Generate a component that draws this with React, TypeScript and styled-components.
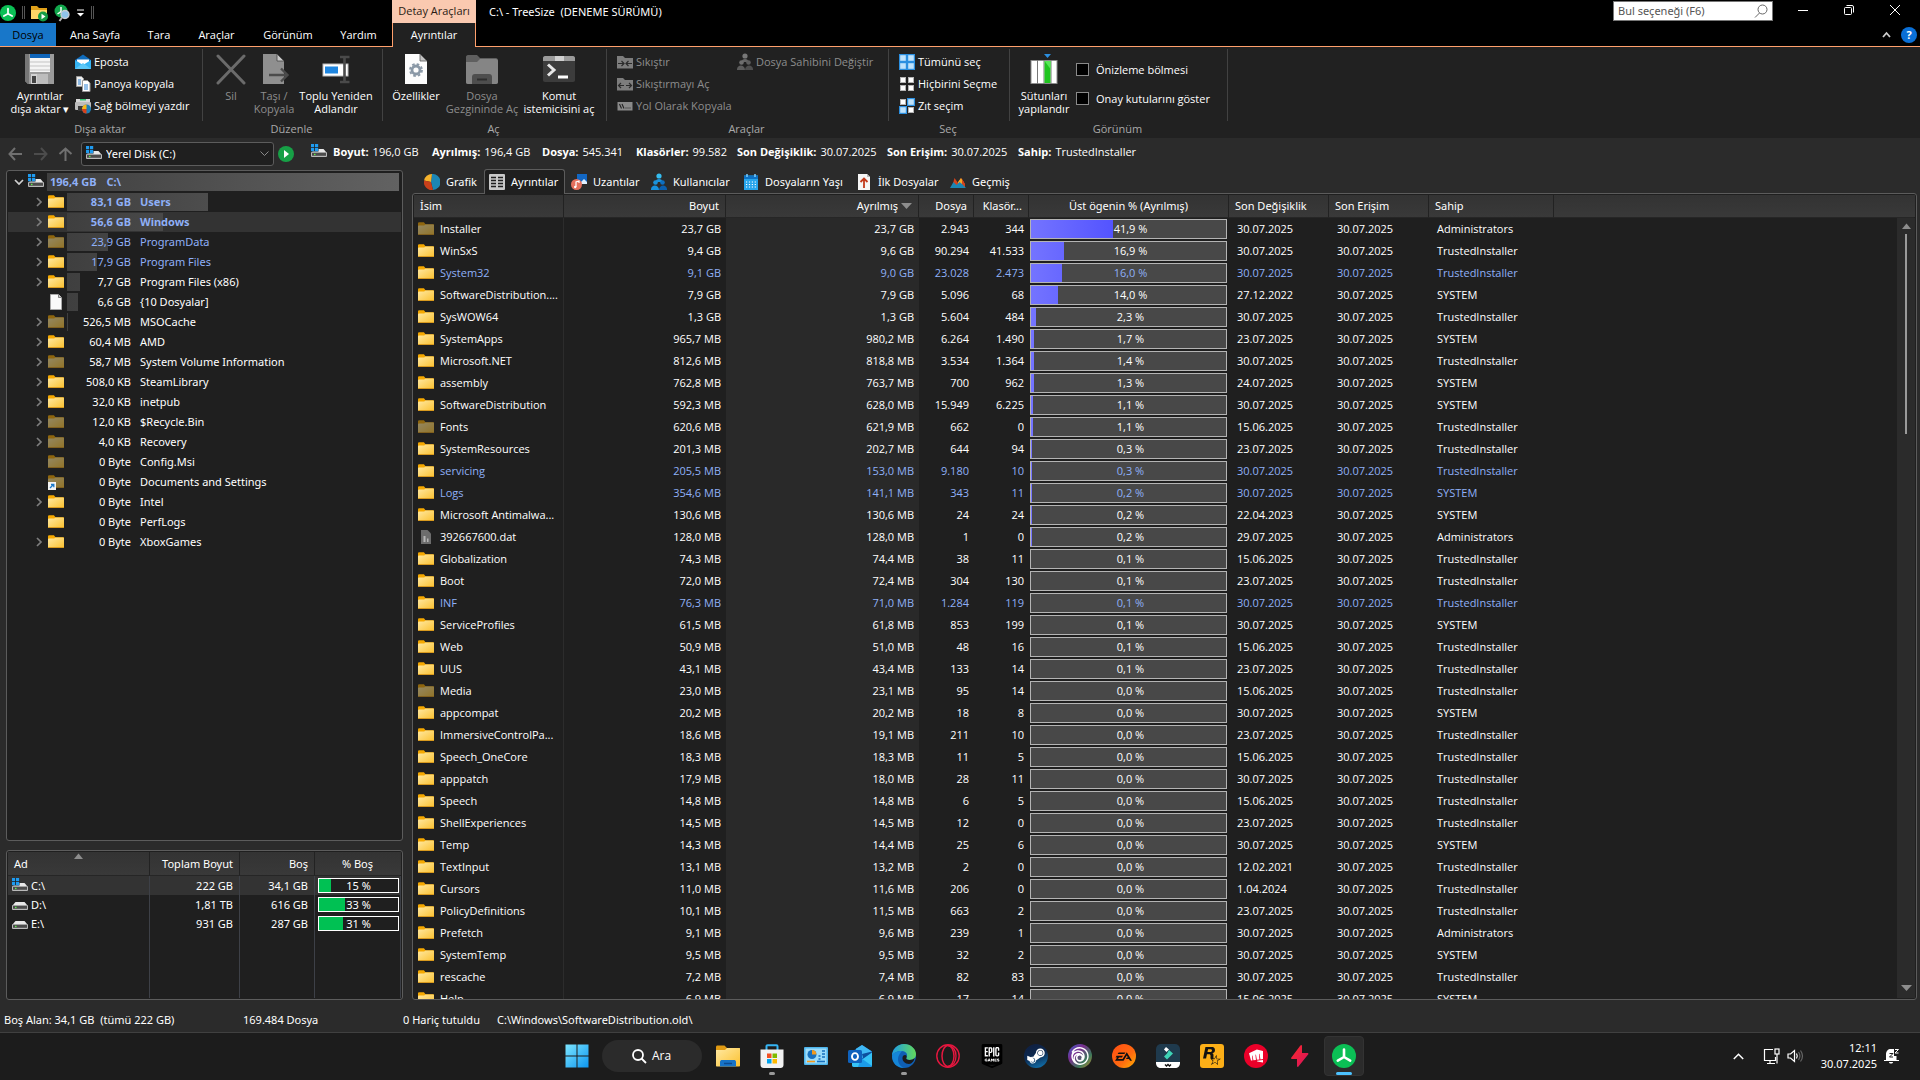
import React from "react";
import styled, { createGlobalStyle, css } from "styled-components";
import { SiEpicgames, SiUbisoft, SiEa, SiRockstargames, SiRiotgames } from "react-icons/si";
import { FaSteamSymbol } from "react-icons/fa";

const wide = `"Noto Sans", "Open Sans", sans-serif`;

const Global = createGlobalStyle`
  *, *::before, *::after { box-sizing: border-box; }
  body {
    margin: 0;
    background: #2b2b2b;
    color: #fff;
    font-family: "Open Sans", "Noto Sans", sans-serif;
    font-size: 11px;
    line-height: 14px;
    overflow: hidden;
  }
  button, input, select { font: inherit; color: inherit; }
  button { background: none; border: 0; padding: 0; margin: 0; cursor: default; }
  svg { display: block; flex: none; }
  ul { list-style: none; margin: 0; padding: 0; }
`;

const Screen = styled.div`
  height: 100vh;
  display: flex;
  flex-direction: column;
  white-space: nowrap;
`;

/* ---------- title bar ---------- */

const TitleArea = styled.header`
  flex: none;
  display: grid;
  grid-template-columns: 392px 84px 1fr auto;
  grid-template-rows: 23px 24px;
  background: linear-gradient(#ffa06c, #ffa06c) bottom / 100% 1px no-repeat #000;
`;
const QuickBar = styled.div`
  display: flex;
  align-items: center;
  gap: 6px;
  padding-top: 2px;
`;
const Grip = styled.span`
  width: 3px;
  height: 13px;
  border: 1px solid #555;
  border-width: 0 1px;
`;
const ContextTitle = styled.div`
  background: #fac9b0;
  color: #2a1c14;
  text-align: center;
  line-height: 21px;
`;
const WindowTitle = styled.h1`
  margin: 0;
  padding-left: 13px;
  font-family: ${wide};
  font-size: 11px;
  font-weight: 400;
  line-height: 23px;
  white-space: pre;
`;
const WindowTools = styled.div`
  display: flex;
  align-items: flex-start;
  padding-right: 2px;
`;
const SearchBox = styled.label`
  display: flex;
  align-items: center;
  width: 160px;
  height: 20px;
  margin: 1px 7px 0 0;
  padding: 0 4px;
  background: #fff;
  border: 1px solid #777;
  input {
    flex: 1;
    min-width: 0;
    border: 0;
    padding: 0;
    outline: 0;
    background: none;
    color: #333;
    font-family: ${wide};
  }
  input::placeholder { color: #555; opacity: 1; }
`;
const WinButton = styled.button`
  width: 46px;
  height: 20px;
  display: grid;
  place-items: center;
`;
const MenuTabs = styled.nav`
  display: flex;
  grid-column: 1;
`;
const MenuTab = styled.button<{ $w: number; $file?: boolean }>`
  width: ${p => p.$w}px;
  height: 23px;
  ${p => p.$file && css`background: #1877c9; color: #000;`}
`;
const ActiveTab = styled.button`
  height: 24px;
  background: #212121;
  border: 1px solid #ffa06c;
  border-width: 0 1px;
`;
const CornerTools = styled.div`
  grid-column: 4;
  display: flex;
  justify-content: flex-end;
  align-items: center;
  gap: 10px;
  padding-right: 3px;
`;
const Help = styled.button`
  width: 16px;
  height: 16px;
  border-radius: 50%;
  background: #0a6fd6;
  font-weight: 700;
  line-height: 16px;
`;

/* ---------- ribbon ---------- */

const Ribbon = styled.div`
  flex: none;
  display: flex;
  height: 91px;
  padding-top: 2px;
  background: #212121;
`;
const Group = styled.section<{ $w: number }>`
  width: ${p => p.$w}px;
  display: flex;
  flex-direction: column;
  background: linear-gradient(#424242, #424242) right top / 1px 72px no-repeat;
`;
const GroupBody = styled.div<{ $pad: number }>`
  height: 72px;
  display: flex;
  padding-left: ${p => p.$pad}px;
`;
const GroupName = styled.h2`
  margin: 0;
  padding-right: 3px;
  text-align: center;
  font-size: 11px;
  font-weight: 400;
  line-height: 16px;
  color: #a9a9a9;
`;
const BigButton = styled.button<{ $w: number; $off?: boolean }>`
  width: ${p => p.$w}px;
  height: 72px;
  display: flex;
  flex-direction: column;
  align-items: center;
  justify-content: flex-start;
  padding-top: 4px;
  gap: 4px;
  line-height: 13px;
  color: ${p => (p.$off ? "#8d8d8d" : "#fff")};
  span { width: max-content; }
`;
const Stack = styled.div<{ $w?: number; $gap?: number }>`
  width: ${p => (p.$w ? p.$w + "px" : "auto")};
  margin-left: ${p => p.$gap ?? 0}px;
  display: flex;
  flex-direction: column;
  padding-top: 2px;
`;
const SmallButton = styled.button<{ $off?: boolean }>`
  height: 22px;
  display: flex;
  align-items: center;
  gap: 3px;
  color: ${p => (p.$off ? "#8d8d8d" : "#fff")};
`;
const CheckRow = styled.label`
  height: 29px;
  display: flex;
  align-items: center;
  gap: 7px;
  input {
    appearance: none;
    width: 13px;
    height: 13px;
    margin: 0;
    background: #000;
    border: 1px solid #8a8a8a;
  }
`;
const CheckStack = styled.div`
  padding: 6px 0 0 6px;
`;

/* ---------- address row ---------- */

const AddressRow = styled.div`
  flex: none;
  height: 32px;
  display: flex;
  align-items: center;
  padding-left: 6px;
`;
const NavButton = styled.button`
  width: 25px;
  display: flex;
  align-items: center;
  padding-left: 2px;
`;
const Address = styled.label`
  width: 193px;
  height: 24px;
  display: flex;
  align-items: center;
  gap: 4px;
  padding: 0 4px;
  background: #1f1f1f;
  border: 1px solid #5c5c5c;
  border-radius: 3px;
  font-family: ${wide};
  select {
    appearance: none;
    flex: 1;
    background: none;
    border: 0;
    padding: 0;
    outline: 0;
  }
`;
const GoButton = styled.button`
  padding: 0 17px 0 4px;
`;
const FactBar = styled.div`
  display: flex;
  align-items: center;
  gap: 6px;
  padding-bottom: 4px;
`;
const Facts = styled.dl`
  display: flex;
  margin: 0;
`;
const Fact = styled.div<{ $w: number }>`
  width: ${p => p.$w}px;
  display: flex;
  gap: 4px;
  dt { font-weight: 700; }
  dd { margin: 0; }
`;

/* ---------- panels ---------- */

const Main = styled.main`
  flex: 1;
  min-height: 0;
  display: grid;
  grid-template-columns: 397px minmax(0, 1fr);
  gap: 9px;
  padding: 0 3px 0 6px;
`;
const LeftColumn = styled.div`
  min-height: 0;
  display: flex;
  flex-direction: column;
  gap: 9px;
`;
const RightColumn = styled.div`
  min-height: 0;
  display: flex;
  flex-direction: column;
`;
const Panel = styled.section`
  background: #1f1f1f;
  border: 1px solid #5c5c5c;
  border-radius: 3px;
  padding: 1px;
  overflow: hidden;
`;
const TreePanel = styled(Panel)`
  flex: 1;
  min-height: 0;
`;
const DrivePanel = styled(Panel)`
  flex: none;
  height: 150px;
`;
const DetailPanel = styled(Panel)`
  flex: 1;
  min-height: 0;
  position: relative;
`;

const TreeRow = styled.li<{ $root?: boolean; $sel?: boolean; $tone?: "bold" | "blue" }>`
  height: 20px;
  display: flex;
  align-items: center;
  padding: 0 2px 0 ${p => (p.$root ? 6 : 28)}px;
  background: ${p => (p.$sel ? "#333" : "none")};
  font-family: ${wide};
  color: ${p => (p.$tone ? "#8fb0f7" : "#fff")};
  font-weight: ${p => (p.$tone === "bold" ? 700 : 400)};
`;
const Twisty = styled.button<{ $root?: boolean }>`
  width: ${p => (p.$root ? 14 : 12)}px;
  height: 20px;
  display: flex;
  align-items: center;
`;
const TreeCell = styled.div<{ $root?: boolean }>`
  flex: 1;
  position: relative;
  display: flex;
  height: 18px;
  align-items: center;
  margin-left: 3px;
  gap: ${p => (p.$root ? 10 : 9)}px;
  padding-left: ${p => (p.$root ? 3 : 0)}px;
`;
const TreeBar = styled.span`
  position: absolute;
  inset: 0 auto 0 0;
  background: linear-gradient(90deg, #3f3f3f, #626262) 0 0 / 353px 100% no-repeat;
`;
const TreeSize = styled.span<{ $root?: boolean }>`
  position: relative;
  width: ${p => (p.$root ? "auto" : "64px")};
  text-align: right;
`;
const TreeName = styled.span`
  position: relative;
`;

const Table = styled.table`
  width: 100%;
  table-layout: fixed;
  border-collapse: separate;
  border-spacing: 0;
`;
const HeadCell = styled.th<{ $align?: string; $edge?: boolean; $tall?: boolean }>`
  height: ${p => (p.$tall ? 24 : 23)}px;
  padding: 0 6px;
  text-align: ${p => p.$align || "left"};
  font-family: ${wide};
  font-weight: 400;
  background: linear-gradient(#333, #393939);
  border-right: 1px solid ${p => (p.$edge ? "transparent" : "#222")};
  border-bottom: 1px solid #262626;
  overflow: hidden;
  position: relative;
`;
const HeadInner = styled.span`
  display: inline-flex;
  align-items: center;
  gap: 3px;
`;
const SortMark = styled.span`
  position: absolute;
  top: 1px;
  left: 0;
  right: 0;
  display: flex;
  justify-content: center;
`;
const Row = styled.tr<{ $blue?: boolean }>`
  color: ${p => (p.$blue ? "#8fb0f7" : "#fff")};
`;
const Cell = styled.td<{ $align?: string; $shade?: boolean; $line?: boolean; $pad?: number }>`
  height: 22px;
  padding: 0 ${p => p.$pad ?? 4}px 0 ${p => p.$pad ?? 4}px;
  text-align: ${p => p.$align || "left"};
  background: ${p => (p.$shade ? "#292929" : "none")};
  border-right: 1px solid ${p => (p.$line ? "#2c2c2c" : "transparent")};
`;
const NameBox = styled.div<{ $gap: number }>`
  display: flex;
  align-items: center;
  gap: ${p => p.$gap}px;
`;
const Meter = styled.div`
  position: relative;
  height: 20px;
  line-height: 18px;
  background: #484848;
  border: 1px solid #b4b4b4;
  text-align: center;
  padding-left: 4px;
  span { position: relative; }
`;
const MeterFill = styled.i`
  position: absolute;
  inset: 0 auto 0 0;
  background: linear-gradient(90deg, #7474ff, #2626ff) 0 0 / 196px 100% no-repeat;
`;
const ScrollBar = styled.div`
  position: absolute;
  top: 24px;
  right: 1px;
  bottom: 1px;
  width: 18px;
  background: #2b2b2b;
  display: flex;
  flex-direction: column;
  align-items: center;
  justify-content: space-between;
  padding: 5px 0 7px;
`;
const Thumb = styled.div`
  width: 2px;
  height: 26%;
  margin: 5px 0 auto;
  background: #9a9a9a;
`;

const DriveTable = styled(Table)`
  height: 100%;
  font-family: ${wide};
`;
const DriveRow = styled.tr<{ $sel?: boolean }>`
  background: ${p => (p.$sel ? "#333" : "none")};
`;
const DriveCell = styled.td<{ $align?: string; $tall?: boolean }>`
  height: ${p => (p.$tall ? "auto" : "19px")};
  padding: 0 6px 0 4px;
  text-align: ${p => p.$align || "left"};
  border-right: 1px solid #3d4047;
`;
const DriveMeterCell = styled(DriveCell)`
  padding: 0 1px 0 3px;
`;
const DriveMeter = styled.div`
  position: relative;
  height: 15px;
  line-height: 13px;
  border: 1px solid #fff;
  background: #1f1f1f;
  text-align: center;
  span { position: relative; }
  i { position: absolute; inset: 0 auto 0 0; background: #00c153; }
`;

const ViewTabs = styled.nav`
  flex: none;
  height: 23px;
  display: flex;
  align-items: stretch;
`;
const ViewTab = styled.button<{ $w: number; $on?: boolean }>`
  width: ${p => p.$w}px;
  display: flex;
  align-items: center;
  gap: 6px;
  padding-left: 6px;
  font-family: ${wide};
  ${p => p.$on && css`
    background: #1f1f1f;
    border: 1px solid #5c5c5c;
    border-bottom: 0;
    border-radius: 3px 3px 0 0;
    padding-left: 4px;
    margin: -1px 0 -1px;
    z-index: 1;
  `}
  &:first-child { padding-left: 12px; }
`;

const Status = styled.footer`
  flex: none;
  height: 32px;
  display: grid;
  grid-template-columns: 239px 160px 94px 1fr;
  align-items: center;
  padding: 8px 0 0 4px;
  align-content: start;
  font-family: ${wide};
  line-height: 24px;
  white-space: pre;
`;

/* ---------- task bar ---------- */

const TaskBar = styled.footer`
  flex: none;
  height: 48px;
  display: grid;
  grid-template-columns: 1fr auto 1fr;
  align-items: center;
  padding-bottom: 1px;
  background: #1c1c1c;
  border-top: 1px solid #404040;
`;
const TaskItems = styled.div`
  grid-column: 2;
  display: flex;
  align-items: center;
`;
const TaskButton = styled.button<{ $on?: boolean }>`
  position: relative;
  width: 40px;
  height: 40px;
  margin: 0 2px;
  display: grid;
  place-items: center;
  border-radius: 4px;
  border: 1px solid ${p => (p.$on ? "#333" : "transparent")};
  background: ${p => (p.$on ? "#2b2b2b" : "none")};
`;
const RunMark = styled.span<{ $on?: boolean }>`
  position: absolute;
  bottom: 0;
  width: ${p => (p.$on ? 16 : 6)}px;
  height: 3px;
  border-radius: 2px;
  background: ${p => (p.$on ? "#4cc2ff" : "#9a9a9a")};
`;
const SearchPill = styled.button`
  width: 100px;
  height: 32px;
  margin: 0 4px 0 3px;
  display: flex;
  align-items: center;
  justify-content: center;
  gap: 5px;
  border-radius: 16px;
  background: #2b2b2b;
  font-size: 12px;
`;
const Disc = styled.span<{ $bg: string; $radius?: string }>`
  width: 24px;
  height: 24px;
  display: grid;
  place-items: center;
  border-radius: ${p => p.$radius || "50%"};
  background: ${p => p.$bg};
`;
const Tray = styled.div`
  display: flex;
  align-items: center;
  justify-content: flex-end;
  padding-right: 20px;
`;
const TrayButton = styled.button<{ $w: number }>`
  width: ${p => p.$w}px;
  display: grid;
  place-items: center;
`;
const Clock = styled.button`
  width: 68px;
  text-align: right;
  line-height: 16px;
  font-family: ${wide};
  margin-right: 7px;
`;

/* ---------- icons ---------- */

const Folder = ({ dim, link }: { dim?: boolean; link?: boolean }) => (
  <svg width="16" height="16" viewBox="0 0 16 16">
    <g opacity={dim ? 0.52 : 1}>
      <path d="M0 2.500C0 1.700.6 1.300 1.300 1.300h4.600l1.600 2H15c.6 0 1 .4 1 1V8H0z" fill="#f5a800" />
      <path d="M0 5.400c0-.5.4-.9.9-.9h5.300l1.200-1H15c.6 0 1 .4 1 1v8.400c0 .7-.4 1.100-1.100 1.100H1.100C.4 14 0 13.600 0 12.900z" fill="url(#folderFace)" />
      <path d="M.2 13.500h15.600" stroke="#d99a1e" />
    </g>
    {link && (
      <g>
        <rect x="0" y="8" width="8" height="8" fill="#f4f4f4" />
        <path d="M2 14l3-3M3 10.500h2.800v2.800" stroke="#1979ca" strokeWidth="1.300" fill="none" />
      </g>
    )}
  </svg>
);
const Doc = ({ dim }: { dim?: boolean }) => (
  <svg width="16" height="16" viewBox="0 0 16 16">
    {dim ? (
      <>
        <path d="M3 1h6.500L13 4.500V15H3z" fill="#6c6c6c" />
        <path d="M5.500 7h2v6h-2zM9 9.500h1.500V13H9z" fill="#b5b5b5" />
      </>
    ) : (
      <>
        <path d="M2.500.5h8l3 3v12h-11z" fill="#fafafa" stroke="#aaa" />
        <path d="M10.500.5v3h3" fill="#ccc" stroke="#555" strokeWidth=".7" />
      </>
    )}
  </svg>
);
const Drive = ({ win }: { win?: boolean }) => (
  <svg width="16" height="16" viewBox="0 0 16 16">
    <path d="M3.500 5h9L15.500 8.500H.5z" fill="#e8e8e8" />
    <rect x="0" y="8" width="16" height="5" rx="1" fill="#b9b9b9" />
    <rect x="1" y="8.800" width="14" height="3" fill="#4c4c4c" />
    <rect x="3" y="9.800" width="1.500" height="1.300" fill="#5ef04a" />
    {win && (
      <>
        <rect x="0" y="0" width="7.500" height="7.500" fill="#1f1f1f" />
        <path d="M0 0h3.200v3.200H0zM4 0h3.200v3.200H4zM0 4h3.200v3.200H0zM4 4h3.200v3.200H4z" fill="#1e9bf0" />
      </>
    )}
  </svg>
);
const Defs = styled.svg`
  position: absolute;
`;
const Gradients = () => (
  <Defs width="0" height="0" aria-hidden="true">
    <defs>
      <linearGradient id="folderFace" x1="0" y1="0" x2="1" y2="1">
        <stop offset="0" stopColor="#ffe9a3" /><stop offset="1" stopColor="#fbc12f" />
      </linearGradient>
      <linearGradient id="winTile" x1="0" y1="0" x2="24" y2="24" gradientUnits="userSpaceOnUse">
        <stop offset="0" stopColor="#7fe7ff" /><stop offset="1" stopColor="#0a94ef" />
      </linearGradient>
      <linearGradient id="edgeA" x1="0" y1="0" x2="1" y2="0">
        <stop offset="0" stopColor="#1f9de4" /><stop offset="1" stopColor="#62d95a" />
      </linearGradient>
      <linearGradient id="bolt" x1="0" y1="0" x2="1" y2="1">
        <stop offset="0" stopColor="#ff2a2a" /><stop offset="1" stopColor="#d4125f" />
      </linearGradient>
    </defs>
  </Defs>
);
const TreeLogo = ({ s }: { s: number }) => (
  <svg width={s} height={s} viewBox="0 0 24 24">
    <circle cx="12" cy="12" r="12" fill="#0bbf55" />
    <path d="M12 5.500V13M12 13l-6.200 3.600M12 13l6.200 3.600" stroke="#fff" strokeWidth="2.600" strokeLinecap="round" fill="none" />
  </svg>
);
const FolderPlay = () => (
  <svg width="17" height="18" viewBox="0 0 17 18">
    <path d="M0 2h6l2 2h8v11H0z" fill="#e0a11a" />
    <path d="M0 6h16v9H0z" fill="#ffd666" />
    <circle cx="12" cy="12.500" r="5" fill="#149b45" />
    <path d="M10.500 9.800l4 2.700-4 2.700z" fill="#fff" />
  </svg>
);
const LogoSearch = () => (
  <svg width="16" height="18" viewBox="0 0 16 18">
    <circle cx="7" cy="7" r="6.500" fill="#12a74c" />
    <path d="M7 3v4.500L3.500 10" stroke="#fff" strokeWidth="1.500" fill="none" />
    <circle cx="11" cy="10.500" r="4" fill="#8fc4ea" stroke="#c5ccd2" strokeWidth="1.400" />
    <path d="M8 13.500L5.500 17" stroke="#b8b8b8" strokeWidth="2" />
  </svg>
);
const Floppy = () => (
  <svg width="32" height="32" viewBox="0 0 32 32">
    <path d="M1 1h29v30H4l-3-3z" fill="#9b9b9b" />
    <path d="M1 1h4v30H4l-3-3z" fill="#777" />
    <rect x="6" y="1" width="20" height="18" fill="#f4f4f4" />
    <rect x="6" y="1" width="20" height="4" fill="#0e64b9" />
    <path d="M6 9h20M6 13h20M6 17h20" stroke="#c3c3c3" />
    <rect x="7" y="21" width="17" height="10" fill="#d3d3d3" />
    <rect x="8" y="23" width="4" height="7" fill="#444" />
    <path d="M13 21h11v10H13z" fill="#bdbdbd" />
  </svg>
);
const Mail = () => (
  <svg width="16" height="16" viewBox="0 0 16 16">
    <path d="M0 6l8-5.500L16 6v9H0z" fill="#0f6cbd" />
    <path d="M2 5.500h12V10H2z" fill="#fff" />
    <path d="M0 6l8 5 8-5v9H0z" fill="#35b4f3" />
    <path d="M0 15l8-6 8 6z" fill="#5cc8f8" />
  </svg>
);
const Copy = () => (
  <svg width="16" height="16" viewBox="0 0 16 16">
    <path d="M1.500.5h5l2 2v8h-7z" fill="#eee" stroke="#999" />
    <path d="M7.500 4.500h5l2.500 2.500v8.500H7.500z" fill="#fff" stroke="#999" />
    <path d="M3 4h3M3 6h3M3 8h3M9 9h4M9 11h4M9 13h4" stroke="#2f83d6" />
  </svg>
);
const Printer = () => (
  <svg width="16" height="16" viewBox="0 0 16 16">
    <rect x="1" y="1" width="14" height="3" fill="#d7d7d7" />
    <rect x="5" y="1" width="6" height="1.500" fill="#38c172" />
    <rect x="0" y="4" width="16" height="8" rx="1" fill="#bdbdbd" />
    <path d="M3 8h9v5H3z" fill="#3a3a3a" />
    <circle cx="11.500" cy="11" r="4.500" fill="#1c7fb5" />
    <path d="M11.500 11V6.500A4.500 4.500 0 0 0 7 11z" fill="#f7b718" />
    <path d="M7 11h4.500v4.500A4.500 4.500 0 0 1 7 11z" fill="#d7421b" />
  </svg>
);
const Cross = () => (
  <svg width="32" height="32" viewBox="0 0 32 32">
    <path d="M3 3l26 27M29 3L3 30" stroke="#6b6b6b" strokeWidth="3" strokeLinecap="round" />
  </svg>
);
const MoveDoc = () => (
  <svg width="32" height="32" viewBox="0 0 32 32">
    <path d="M5 1h14l7 7v23H5z" fill="#8f8f8f" />
    <path d="M19 1v7h7z" fill="#c9c9c9" stroke="#444" strokeWidth=".8" />
    <path d="M11 22h18M23 15.500l6.500 6.500-6.500 6.500" stroke="#4b4b4b" strokeWidth="2.400" fill="none" />
  </svg>
);
const Rename = () => (
  <svg width="32" height="32" viewBox="0 0 32 32">
    <rect x="3" y="11" width="25" height="12" fill="#fff" stroke="#bbb" />
    <rect x="5" y="13.500" width="13" height="7" fill="#1f86e0" />
    <path d="M24.500 4v25M20 4h9.500M20 29h9.500" stroke="#4a4a4a" strokeWidth="2.600" />
  </svg>
);
const PropsDoc = () => (
  <svg width="32" height="32" viewBox="0 0 32 32">
    <path d="M5 1h15l7 7v23H5z" fill="#fcfcfc" />
    <path d="M20 1v7h7z" fill="#c4c4c4" stroke="#555" strokeWidth=".8" />
    <circle cx="16" cy="17" r="4" fill="none" stroke="#8a98a6" strokeWidth="2.800" />
    <circle cx="16" cy="17" r="6" fill="none" stroke="#8a98a6" strokeWidth="1.800" strokeDasharray="2.600 2.112" />
  </svg>
);
const GreyFolder = () => (
  <svg width="32" height="32" viewBox="0 0 32 32">
    <path d="M0 4c0-1 .7-2 2-2h9l3 3h16c1 0 2 1 2 2v22c0 1-1 2-2 2H2c-1.300 0-2-1-2-2z" fill="#5f5f5f" />
    <path d="M0 9h11l3-3h16c1 0 2 1 2 2v21c0 1-1 2-2 2H2c-1.300 0-2-1-2-2z" fill="#858585" />
    <path d="M6 31v-7c0-2 1-3 3-3h14c2 0 3 1 3 3v7z" fill="#4e4e4e" />
    <path d="M11 26.500h10" stroke="#2e2e2e" strokeWidth="2" />
  </svg>
);
const Terminal = () => (
  <svg width="32" height="32" viewBox="0 0 32 32">
    <path d="M0 5c0-1 .7-2 2-2h28c1.300 0 2 1 2 2v3H0z" fill="#9a9a9a" />
    <path d="M12 3h9v5h-9z" fill="#cfcfcf" />
    <path d="M0 8h32v19c0 1-.7 2-2 2H2c-1.300 0-2-1-2-2z" fill="#3c3c3c" />
    <path d="M5 11.500l6 5.500-6 5.500" stroke="#e6e6e6" strokeWidth="3" fill="none" />
    <path d="M15 24h10" stroke="#fff" strokeWidth="3" />
  </svg>
);
const ColumnsIcon = () => (
  <svg width="32" height="32" viewBox="0 0 32 32">
    <path d="M16 1h7l-3.500 4z" fill="#2b8fe0" />
    <rect x="3" y="7.500" width="26" height="23" fill="#fff" stroke="#8c8c8c" />
    <path d="M9.500 7v24M16 7v24M23 7v24" stroke="#777" />
    <rect x="16.500" y="8" width="6" height="22" fill="#1fc51f" />
    <path d="M16.500 8h6v8z" fill="#57e857" />
  </svg>
);
const GreyZip = ({ out }: { out?: boolean }) => (
  <svg width="16" height="16" viewBox="0 0 16 16">
    <path d="M0 2h6l2 2h8v10.500H0z" fill="#7d7d7d" />
    <path d={out ? "M7 9.500H2M4 7L1.500 9.500 4 12M9 9.500h5M12 7l2.500 2.500L12 12" : "M1 9.500h6M4.500 7L7 9.500 4.500 12M15 9.500H9M11.500 7L9 9.500l2.500 2.500"} stroke="#2b2b2b" strokeWidth="1.200" fill="none" />
  </svg>
);
const PathIcon = () => (
  <svg width="16" height="16" viewBox="0 0 16 16">
    <rect x=".5" y="4" width="15" height="8.500" fill="#8a8a8a" />
    <path d="M2.500 6l2 4.500M5 6l2 4.500M8.500 10h1M10.500 10h1M12.500 10h1" stroke="#222" strokeWidth="1.100" />
  </svg>
);
const People = ({ grey }: { grey?: boolean }) => (
  <svg width="16" height="18" viewBox="0 0 16 18">
    <circle cx="8" cy="3" r="2.600" fill={grey ? "#777" : "#35bdf0"} />
    <path d="M4.500 9c0-4 7-4 7 0z" fill={grey ? "#666" : "#1b93dc"} />
    <circle cx="4.500" cy="9.500" r="2.300" fill={grey ? "#6e6e6e" : "#1b93dc"} />
    <circle cx="11.500" cy="9.500" r="2.300" fill={grey ? "#5e5e5e" : "#0d6fc2"} />
    <path d="M0 17c-.5-6 8-6 8 0z" fill={grey ? "#5c5c5c" : "#1792df"} />
    <path d="M8 17c0-6 8.500-6 8 0z" fill={grey ? "#4e4e4e" : "#0b5fae"} />
  </svg>
);
const SelectIcon = ({ on }: { on: boolean[] }) => (
  <svg width="16" height="16" viewBox="0 0 16 16">
    {[[0, 0], [8, 0], [0, 8], [8, 8]].map(([x, y], i) =>
      on[i] ? (
        <g key={i}>
          <rect x={x} y={y} width="8" height="8" fill="#2b8fe0" />
          <rect x={x + 1.2} y={y + 1.2} width="5.600" height="5.600" fill="#bfe2fb" />
        </g>
      ) : (
        <rect key={i} x={x + 1.5} y={y + 1.5} width="5" height="5" fill="#fff" stroke="#b5b5b5" />
      )
    )}
  </svg>
);
const Arrow = ({ d, c }: { d: string; c: string }) => (
  <svg width="15" height="14" viewBox="0 0 15 14"><path d={d} stroke={c} strokeWidth="2" fill="none" /></svg>
);
const Play = () => (
  <svg width="16" height="16" viewBox="0 0 16 16">
    <circle cx="8" cy="8" r="8" fill="#17a046" /><path d="M6 4l5 4-5 4z" fill="#fff" />
  </svg>
);
const Pie = () => (
  <svg width="16" height="16" viewBox="0 0 16 16">
    <path d="M8 0a8 8 0 0 1 1 16L7 8z" fill="#1c86b4" />
    <path d="M7 8L0 6.500A8 8 0 0 1 8 0z" fill="#f6b32c" />
    <path d="M7 8l2 8A8 8 0 0 1 0 6.500z" fill="#c8401a" />
  </svg>
);
const Sheet = () => (
  <svg width="16" height="16" viewBox="0 0 16 16">
    <rect width="16" height="16" rx="1" fill="#c9c9c9" />
    <path d="M2 3.500h5M9 3.500h5M2 6.500h5M9 6.500h5M2 9.500h5M9 9.500h5M2 12.500h5M9 12.500h5" stroke="#1f1f1f" strokeWidth="1.400" />
  </svg>
);
const Media = () => (
  <svg width="16" height="16" viewBox="0 0 16 16">
    <rect x="6" y="0" width="10" height="10" fill="#1267c4" />
    <path d="M8 10l5-5 3 3v2z" fill="#dfefff" />
    <circle cx="5.500" cy="10.500" r="5.500" fill="#e3705d" />
    <path d="M5 13V8l3-1v2" stroke="#fff" strokeWidth="1.200" fill="none" /><circle cx="4.200" cy="13" r="1.200" fill="#fff" />
  </svg>
);
const Calendar = () => (
  <svg width="16" height="16" viewBox="0 0 16 16">
    <rect x="1" y="1.500" width="14" height="14.500" fill="#27a5ec" /><rect x="1" y="1.500" width="14" height="3.500" fill="#0d72c4" />
    <path d="M4 0v3M12 0v3" stroke="#7fd0ff" strokeWidth="1.500" />
    <path d="M3 8h10M3 10.500h10M3 13h10" stroke="#fff" strokeWidth="1.200" strokeDasharray="1.200 1.700" />
  </svg>
);
const TopDoc = () => (
  <svg width="16" height="16" viewBox="0 0 16 16">
    <path d="M2 0h9l3 3v13H2z" fill="#f6f6f6" /><path d="M11 0v3h3" fill="#bbb" />
    <path d="M8 14V5M4.500 8L8 4.500 11.500 8" stroke="#c23a1c" strokeWidth="1.800" fill="none" />
  </svg>
);
const Hills = () => (
  <svg width="16" height="16" viewBox="0 0 16 16">
    <path d="M2 13l2.500-9L8 9l3-5 4 6v3z" fill="#d4431c" /><path d="M8 8l3-4 2.500 4v5H8z" fill="#f2a72a" />
    <path d="M12 5l3 5v3h-3z" fill="#d4431c" />
    <path d="M0 14l3.500-6 3 3 3-3 2.500 2 4 4z" fill="#1c86b4" />
  </svg>
);
const Tri = ({ up }: { up?: boolean }) => (
  <svg width="11" height="6" viewBox="0 0 11 6"><path d={up ? "M1 6l4.500-5.500L10 6z" : "M0 0h11L5.500 6z"} fill="#8d8d8d" /></svg>
);
const Chevron = ({ open }: { open?: boolean }) => (
  <svg width="10" height="10" viewBox="0 0 10 10">
    <path d={open ? "M1 3l4 4 4-4" : "M1 1l4 4-4 4"} stroke={open ? "#d0d0d0" : "#7d7d7d"} strokeWidth="1.700" fill="none" />
  </svg>
);

/* ---------- task bar pictures ---------- */

const Windows = () => (
  <svg width="24" height="24" viewBox="0 0 24 24">
    <path d="M.5.500h11v11H.5zM12.500.500h11v11h-11zM.5 12.500h11v11H.5zM12.500 12.500h11v11h-11z" fill="url(#winTile)" />
  </svg>
);
const Explorer = () => (
  <svg width="24" height="24" viewBox="0 0 24 24">
    <path d="M0 3c0-.8.600-1.500 1.500-1.500h7L11 4h12c.6 0 1 .4 1 1v5H0z" fill="#e09a12" />
    <path d="M0 6h9l2-2h12c.6 0 1 .4 1 1v16.500c0 .6-.4 1-1 1H1c-.6 0-1-.4-1-1z" fill="url(#folderFace)" />
    <path d="M4 22.500V18c0-1.500 1-2 2-2h12c1 0 2 .5 2 2v4.500z" fill="#1673c7" /><path d="M8 19.500h8" stroke="#0c4a8e" strokeWidth="1.500" />
  </svg>
);
const Store = () => (
  <svg width="24" height="24" viewBox="0 0 24 24">
    <path d="M6.500 6V2.200c0-.6.4-1 1-1h9c.6 0 1 .4 1 1V6" stroke="#35b4f3" strokeWidth="2" fill="none" />
    <path d="M.5 5.500h23V21c0 1.700-1.300 3-3 3h-17c-1.700 0-3-1.300-3-3z" fill="#f2f2f2" />
    <path d="M7 9.500h4.500V14H7z" fill="#f25022" /><path d="M12.500 9.500H17V14h-4.500z" fill="#7fba00" />
    <path d="M7 15h4.500v4.500H7z" fill="#00a4ef" /><path d="M12.500 15H17v4.500h-4.500z" fill="#ffb900" />
  </svg>
);
const Control = () => (
  <svg width="24" height="24" viewBox="0 0 24 24">
    <rect y="3" width="24" height="18" rx="1" fill="#4db5ec" /><rect x="1.500" y="4.500" width="21" height="15" fill="#9bdcfb" />
    <circle cx="8" cy="10.500" r="4.500" fill="#1770bf" /><path d="M8 10.500V6a4.500 4.500 0 0 1 4.500 4.500z" fill="#f39a1d" />
    <path d="M14.500 12h2M14.500 15h2M18 7h3M18 10h3M18 13h3" stroke="#1770bf" strokeWidth="1.400" /><path d="M3 17.500h8" stroke="#f39a1d" strokeWidth="1.600" /><path d="M13 17.500h8" stroke="#1770bf" strokeWidth="1.600" />
  </svg>
);
const Outlook = () => (
  <svg width="24" height="24" viewBox="0 0 24 24">
    <path d="M4 7.500L14 1l10 6.500V21c0 1.200-.8 2-2 2H6c-1.200 0-2-.8-2-2z" fill="#1469c0" />
    <path d="M8 4.800L14 1l10 6.500-9 6.500-7-4z" fill="#3fb8f4" />
    <path d="M14 10l10-2.500V14l-8 3z" fill="#0d4f9e" />
    <path d="M4 19l10-3.500 10-7V21c0 1.200-.8 2-2 2H6c-1.200 0-2-.8-2-2z" fill="#36c3f7" />
    <path d="M13 14l11 8c-.4.600-1 1-2 1H10z" fill="#1b9be8" />
    <rect y="6" width="14" height="13" rx="1.500" fill="#0f62bd" />
    <ellipse cx="7" cy="12.500" rx="3" ry="3.400" fill="none" stroke="#fff" strokeWidth="1.900" />
  </svg>
);
const Edge = () => (
  <svg width="24" height="24" viewBox="0 0 24 24">
    <circle cx="12" cy="12" r="12" fill="#0f5fb4" />
    <path d="M0 12C0 5 5.500 0 12 0c7 0 12 5 12 10 0 4-3 6-6.500 6-2.500 0-4-1-3-2.500C16 11 14.500 7 10 7 5 7 1 9 0 12z" fill="url(#edgeA)" />
    <path d="M10 7c-5 0-9 2-10 5 0 7 5 12 12 12-4-1.500-6-5-6-9 0-3 2-6 4-8z" fill="#1586d8" />
    <path d="M14.500 13.500c-1 1.500.5 2.500 3 2.500 2 0 4-.6 5.200-1.900C22 17 20 20 17 20c-4 0-7-3-6.500-6.500.3-1.800 1.500-2.500 2.500-2.500 1.300 0 2 1.300 1.500 2.500z" fill="#1c1c1c" />
  </svg>
);
const Opera = () => (
  <svg width="24" height="24" viewBox="0 0 24 24" fill="none" stroke="#e5173f">
    <circle cx="12" cy="12" r="11.200" strokeWidth="1.400" /><ellipse cx="12" cy="12" rx="6" ry="10.500" strokeWidth="1.500" />
    <path d="M12 1.500c6 1 8 6 8 10.500s-2 9.500-8 10.500" strokeWidth="1.300" />
  </svg>
);
const Epic = () => (
  <svg width="24" height="24" viewBox="0 0 24 24">
    <rect x="4" y="2" width="16" height="18" fill="#fff" />
    <SiEpicgames size={24} color="#000" />
  </svg>
);
const Filmora = () => (
  <svg width="24" height="24" viewBox="0 0 24 24">
    <rect width="24" height="24" rx="5" fill="#1f3a4d" />
    <path d="M0 18h24v1c0 3-2 5-5 5H5c-3 0-5-2-5-5z" fill="#fff" />
    <path d="M10 3l3 2.500L10.500 8 8 5.500z" fill="#fff" /><path d="M13 6l4 3.500-6 6-3-3 3-3z" fill="#3ed3b6" />
    <path d="M9 20.500l1.500 1.500 1.500-1.500 1.500 1.500 1.500-1.500" stroke="#111" strokeWidth="1.400" fill="none" />
  </svg>
);
const Bolt = () => (
  <svg width="24" height="24" viewBox="0 0 24 24">
    <path d="M12 2l1-1 1 .5V9h6l.5 1L10 23l-1-.5V15H3.500L3 14z" fill="url(#bolt)" />
  </svg>
);

/* ---------- data ---------- */

type TreeItem = { size: string; name: string; bar?: number; leaf?: boolean; icon?: "dim" | "doc" | "link"; tone?: "bold" | "blue"; sel?: boolean };
const tree: TreeItem[] = [
  { size: "83,1 GB", name: "Users", bar: 141, tone: "bold" },
  { size: "56,6 GB", name: "Windows", bar: 96, tone: "bold", sel: true },
  { size: "23,9 GB", name: "ProgramData", bar: 41, tone: "blue", icon: "dim" },
  { size: "17,9 GB", name: "Program Files", bar: 30, tone: "blue" },
  { size: "7,7 GB", name: "Program Files (x86)", bar: 13 },
  { size: "6,6 GB", name: "{10 Dosyalar]", bar: 11, icon: "doc", leaf: true },
  { size: "526,5 MB", name: "MSOCache", bar: 1, icon: "dim" },
  { size: "60,4 MB", name: "AMD" },
  { size: "58,7 MB", name: "System Volume Information", icon: "dim" },
  { size: "508,0 KB", name: "SteamLibrary" },
  { size: "32,0 KB", name: "inetpub" },
  { size: "12,0 KB", name: "$Recycle.Bin", icon: "dim" },
  { size: "4,0 KB", name: "Recovery", icon: "dim" },
  { size: "0 Byte", name: "Config.Msi", icon: "dim", leaf: true },
  { size: "0 Byte", name: "Documents and Settings", icon: "link", leaf: true },
  { size: "0 Byte", name: "Intel" },
  { size: "0 Byte", name: "PerfLogs", leaf: true },
  { size: "0 Byte", name: "XboxGames" },
];

const T = "TrustedInstaller", S = "SYSTEM", A = "Administrators";
const J30 = "30.07.2025", J23 = "23.07.2025", J15 = "15.06.2025";
type Entry = [string, string, string, string, string, string, string, string, string?];
const entries: Entry[] = [
  ["Installer", "23,7 GB", "23,7 GB", "2.943", "344", "41,9", J30, A, "dim"],
  ["WinSxS", "9,4 GB", "9,6 GB", "90.294", "41.533", "16,9", J30, T],
  ["System32", "9,1 GB", "9,0 GB", "23.028", "2.473", "16,0", J30, T, "blue"],
  ["SoftwareDistribution....", "7,9 GB", "7,9 GB", "5.096", "68", "14,0", "27.12.2022", S],
  ["SysWOW64", "1,3 GB", "1,3 GB", "5.604", "484", "2,3", J30, T],
  ["SystemApps", "965,7 MB", "980,2 MB", "6.264", "1.490", "1,7", J23, S],
  ["Microsoft.NET", "812,6 MB", "818,8 MB", "3.534", "1.364", "1,4", J30, T],
  ["assembly", "762,8 MB", "763,7 MB", "700", "962", "1,3", "24.07.2025", S],
  ["SoftwareDistribution", "592,3 MB", "628,0 MB", "15.949", "6.225", "1,1", J30, S],
  ["Fonts", "620,6 MB", "621,9 MB", "662", "0", "1,1", J15, T, "dim"],
  ["SystemResources", "201,3 MB", "202,7 MB", "644", "94", "0,3", J23, T],
  ["servicing", "205,5 MB", "153,0 MB", "9.180", "10", "0,3", J30, T, "blue"],
  ["Logs", "354,6 MB", "141,1 MB", "343", "11", "0,2", J30, S, "blue"],
  ["Microsoft Antimalwa...", "130,6 MB", "130,6 MB", "24", "24", "0,2", "22.04.2023", S],
  ["392667600.dat", "128,0 MB", "128,0 MB", "1", "0", "0,2", "29.07.2025", A, "doc"],
  ["Globalization", "74,3 MB", "74,4 MB", "38", "11", "0,1", J15, T],
  ["Boot", "72,0 MB", "72,4 MB", "304", "130", "0,1", J23, T],
  ["INF", "76,3 MB", "71,0 MB", "1.284", "119", "0,1", J30, T, "blue"],
  ["ServiceProfiles", "61,5 MB", "61,8 MB", "853", "199", "0,1", J30, S],
  ["Web", "50,9 MB", "51,0 MB", "48", "16", "0,1", J15, T],
  ["UUS", "43,1 MB", "43,4 MB", "133", "14", "0,1", J23, T],
  ["Media", "23,0 MB", "23,1 MB", "95", "14", "0,0", J15, T, "dim"],
  ["appcompat", "20,2 MB", "20,2 MB", "18", "8", "0,0", J30, S],
  ["ImmersiveControlPa...", "18,6 MB", "19,1 MB", "211", "10", "0,0", J23, T],
  ["Speech_OneCore", "18,3 MB", "18,3 MB", "11", "5", "0,0", J15, T],
  ["apppatch", "17,9 MB", "18,0 MB", "28", "11", "0,0", J30, T],
  ["Speech", "14,8 MB", "14,8 MB", "6", "5", "0,0", J15, T],
  ["ShellExperiences", "14,5 MB", "14,5 MB", "12", "0", "0,0", J23, T],
  ["Temp", "14,3 MB", "14,4 MB", "25", "6", "0,0", J30, S],
  ["TextInput", "13,1 MB", "13,2 MB", "2", "0", "0,0", "12.02.2021", T],
  ["Cursors", "11,0 MB", "11,6 MB", "206", "0", "0,0", "1.04.2024", T],
  ["PolicyDefinitions", "10,1 MB", "11,5 MB", "663", "2", "0,0", J23, T],
  ["Prefetch", "9,1 MB", "9,6 MB", "239", "1", "0,0", J30, A],
  ["SystemTemp", "9,5 MB", "9,5 MB", "32", "2", "0,0", J30, S],
  ["rescache", "7,2 MB", "7,4 MB", "82", "83", "0,0", J30, T],
  ["Help", "6,9 MB", "6,9 MB", "17", "14", "0,0", J15, S],
];

const drives = [
  { name: "C:\\", total: "222 GB", free: "34,1 GB", pct: 15, win: true },
  { name: "D:\\", total: "1,81 TB", free: "616 GB", pct: 33 },
  { name: "E:\\", total: "931 GB", free: "287 GB", pct: 31 },
];

const facts: [string, string, number][] = [
  ["Boyut:", "196,0 GB", 99],
  ["Ayrılmış:", "196,4 GB", 110],
  ["Dosya:", "545.341", 94],
  ["Klasörler:", "99.582", 101],
  ["Son Değişiklik:", J30, 150],
  ["Son Erişim:", J30, 131],
  ["Sahip:", T, 140],
];

const views: [string, React.ReactNode, number][] = [
  ["Grafik", <Pie />, 72],
  ["Ayrıntılar", <Sheet />, 81],
  ["Uzantılar", <Media />, 80],
  ["Kullanıcılar", <People />, 92],
  ["Dosyaların Yaşı", <Calendar />, 113],
  ["İlk Dosyalar", <TopDoc />, 94],
  ["Geçmiş", <Hills />, 80],
];

const tasks: [string, React.ReactNode, ("run" | "active")?][] = [
  ["Dosya Gezgini", <Explorer />],
  ["Microsoft Store", <Store />, "run"],
  ["Denetim Masası", <Control />],
  ["Outlook", <Outlook />],
  ["Edge", <Edge />, "run"],
  ["Opera", <Opera />],
  ["Epic Games", <Epic />],
  ["Steam", <Disc $bg="linear-gradient(160deg,#111d3c,#0b2a52 50%,#137fbd)"><FaSteamSymbol size={20} /></Disc>],
  ["Ubisoft", <Disc $bg="linear-gradient(135deg,#3b62c9,#7b2c8f 35%,#3c7a5c 70%,#c98a2a)"><SiUbisoft size={18} /></Disc>],
  ["EA", <Disc $bg="linear-gradient(135deg,#ff4f14,#ff6a10 60%,#ffb300)"><SiEa size={17} color="#111" /></Disc>],
  ["Filmora", <Filmora />],
  ["Rockstar", <Disc $bg="#fcaf17" $radius="3px"><SiRockstargames size={18} color="#111" /></Disc>],
  ["Riot", <Disc $bg="#eb0029"><SiRiotgames size={14} /></Disc>],
  ["Bolt", <Bolt />],
  ["TreeSize", <TreeLogo s={24} />, "active"],
];

function TreeView() {
  return (
    <TreePanel aria-label="Klasör ağacı">
      <ul>
        <TreeRow $root $tone="bold">
          <Twisty $root aria-label="Daralt"><Chevron open /></Twisty>
          <Drive win />
          <TreeCell $root>
            <TreeBar style={{ width: "100%" }} />
            <TreeSize $root>196,4 GB</TreeSize>
            <TreeName>C:\</TreeName>
          </TreeCell>
        </TreeRow>
        {tree.map(t => (
          <TreeRow key={t.name} $tone={t.tone} $sel={t.sel}>
            <Twisty aria-label={t.name}>{!t.leaf && <Chevron />}</Twisty>
            {t.icon === "doc" ? <Doc /> : <Folder dim={!!t.icon} link={t.icon === "link"} />}
            <TreeCell>
              {t.bar && <TreeBar style={{ width: t.bar }} />}
              <TreeSize>{t.size}</TreeSize>
              <TreeName>{t.name}</TreeName>
            </TreeCell>
          </TreeRow>
        ))}
      </ul>
    </TreePanel>
  );
}

function DriveList() {
  return (
    <DrivePanel>
      <DriveTable>
        <colgroup><col width="142" /><col width="90" /><col width="75" /><col /></colgroup>
        <thead>
          <tr>
            <HeadCell $tall>Ad<SortMark><Tri up /></SortMark></HeadCell>
            <HeadCell $tall $align="right">Toplam Boyut</HeadCell>
            <HeadCell $tall $align="right">Boş</HeadCell>
            <HeadCell $tall $align="center" $edge>% Boş</HeadCell>
          </tr>
        </thead>
        <tbody>
          {drives.map(d => (
            <DriveRow key={d.name} $sel={d.win}>
              <DriveCell><NameBox $gap={3}><Drive win={d.win} /><span>{d.name}</span></NameBox></DriveCell>
              <DriveCell $align="right">{d.total}</DriveCell>
              <DriveCell $align="right">{d.free}</DriveCell>
              <DriveMeterCell>
                <DriveMeter><i style={{ width: d.pct + "%" }} /><span>{d.pct} %</span></DriveMeter>
              </DriveMeterCell>
            </DriveRow>
          ))}
          <tr><DriveCell $tall /><DriveCell $tall /><DriveCell $tall /><DriveCell $tall /></tr>
        </tbody>
      </DriveTable>
    </DrivePanel>
  );
}

function Details() {
  return (
    <DetailPanel>
      <Table>
        <colgroup>
          <col width="150" /><col width="162" /><col width="193" /><col width="55" /><col width="55" />
          <col width="200" /><col width="100" /><col width="100" /><col width="125" /><col />
        </colgroup>
        <thead>
          <tr>
            <HeadCell>İsim</HeadCell>
            <HeadCell $align="right">Boyut</HeadCell>
            <HeadCell $align="right"><HeadInner>Ayrılmış<Tri /></HeadInner></HeadCell>
            <HeadCell $align="right">Dosya</HeadCell>
            <HeadCell $align="right">Klasör...</HeadCell>
            <HeadCell $align="center">Üst ögenin % (Ayrılmış)</HeadCell>
            <HeadCell>Son Değişiklik</HeadCell>
            <HeadCell>Son Erişim</HeadCell>
            <HeadCell>Sahip</HeadCell>
            <HeadCell $edge />
          </tr>
        </thead>
        <tbody>
          {entries.map(([name, size, alloc, files, dirs, pct, mod, owner, flag]) => {
            const value = parseFloat(pct.replace(",", "."));
            return (
              <Row key={name} $blue={flag === "blue"}>
                <Cell $line>
                  <NameBox $gap={6}>
                    {flag === "doc" ? <Doc dim /> : <Folder dim={flag === "dim"} />}
                    <span>{name}</span>
                  </NameBox>
                </Cell>
                <Cell $align="right">{size}</Cell>
                <Cell $align="right" $shade>{alloc}</Cell>
                <Cell $align="right">{files}</Cell>
                <Cell $align="right">{dirs}</Cell>
                <Cell $pad={1}>
                  <Meter>
                    {value > 0.1 && <MeterFill style={{ width: Math.max(1, Math.round(value * 1.96)) }} />}
                    <span>{pct} %</span>
                  </Meter>
                </Cell>
                <Cell $pad={8}>{mod}</Cell>
                <Cell $pad={8}>{J30}</Cell>
                <Cell $pad={8}>{owner}</Cell>
                <Cell />
              </Row>
            );
          })}
        </tbody>
      </Table>
      <ScrollBar><Tri up /><Thumb /><Tri /></ScrollBar>
    </DetailPanel>
  );
}

export default function App() {
  return (
    <Screen>
      <Global />
      <Gradients />
      <TitleArea>
        <QuickBar>
          <TreeLogo s={16} />
          <Grip />
          <FolderPlay />
          <LogoSearch />
          <svg width="9" height="8" viewBox="0 0 9 8"><path d="M1 1h7" stroke="#fff" /><path d="M1 4h7L4.500 7.500z" fill="#fff" /></svg>
          <Grip />
        </QuickBar>
        <ContextTitle>Detay Araçları</ContextTitle>
        <WindowTitle>{"C:\\ - TreeSize  (DENEME SÜRÜMÜ)"}</WindowTitle>
        <WindowTools>
          <SearchBox>
            <input placeholder="Bul seçeneği (F6)" aria-label="Bul seçeneği" />
            <svg width="14" height="14" viewBox="0 0 14 14" fill="none" stroke="#666"><circle cx="8.500" cy="5.500" r="4.500" /><path d="M5.500 9L1 13.500" /></svg>
          </SearchBox>
          <WinButton aria-label="Simge durumuna küçült"><svg width="10" height="10"><path d="M0 5.500h10" stroke="#fff" /></svg></WinButton>
          <WinButton aria-label="Geri yükle">
            <svg width="10" height="10" viewBox="0 0 10 10" fill="none" stroke="#fff"><rect x=".5" y="2.500" width="7" height="7" rx="1" /><path d="M2.500.5h5.500a1.500 1.500 0 0 1 1.500 1.500v5.500" /></svg>
          </WinButton>
          <WinButton aria-label="Kapat"><svg width="10" height="10"><path d="M0 0l10 10M10 0L0 10" stroke="#fff" /></svg></WinButton>
        </WindowTools>
        <MenuTabs>
          <MenuTab $w={56} $file>Dosya</MenuTab>
          <MenuTab $w={78}>Ana Sayfa</MenuTab>
          <MenuTab $w={50}>Tara</MenuTab>
          <MenuTab $w={65}>Araçlar</MenuTab>
          <MenuTab $w={78}>Görünüm</MenuTab>
          <MenuTab $w={63}>Yardım</MenuTab>
        </MenuTabs>
        <ActiveTab>Ayrıntılar</ActiveTab>
        <CornerTools>
          <svg width="9" height="8" viewBox="0 0 9 8"><path d="M1 6l3.500-4L8 6" stroke="#ccc" strokeWidth="1.800" fill="none" /></svg>
          <Help aria-label="Yardım">?</Help>
        </CornerTools>
      </TitleArea>

      <Ribbon>
        <Group $w={203}>
          <GroupBody $pad={8}>
            <BigButton $w={64}><Floppy /><span>Ayrıntılar<br />dışa aktar ▾</span></BigButton>
            <Stack $gap={3}>
              <SmallButton><Mail />Eposta</SmallButton>
              <SmallButton><Copy />Panoya kopyala</SmallButton>
              <SmallButton><Printer />Sağ bölmeyi yazdır</SmallButton>
            </Stack>
          </GroupBody>
          <GroupName>Dışa aktar</GroupName>
        </Group>
        <Group $w={180}>
          <GroupBody $pad={8}>
            <BigButton $w={40} $off disabled><Cross /><span>Sil</span></BigButton>
            <BigButton $w={46} $off disabled><MoveDoc /><span>Taşı /<br />Kopyala</span></BigButton>
            <BigButton $w={78}><Rename /><span>Toplu Yeniden<br />Adlandır</span></BigButton>
          </GroupBody>
          <GroupName>Düzenle</GroupName>
        </Group>
        <Group $w={224}>
          <GroupBody $pad={6}>
            <BigButton $w={54}><PropsDoc /><span>Özellikler</span></BigButton>
            <BigButton $w={78} $off disabled><GreyFolder /><span>Dosya<br />Gezgininde Aç</span></BigButton>
            <BigButton $w={76}><Terminal /><span>Komut<br />istemicisini aç</span></BigButton>
          </GroupBody>
          <GroupName>Aç</GroupName>
        </Group>
        <Group $w={282}>
          <GroupBody $pad={10}>
            <Stack $w={120}>
              <SmallButton $off disabled><GreyZip />Sıkıştır</SmallButton>
              <SmallButton $off disabled><GreyZip out />Sıkıştırmayı Aç</SmallButton>
              <SmallButton $off disabled><PathIcon />Yol Olarak Kopyala</SmallButton>
            </Stack>
            <Stack><SmallButton $off disabled><People grey />Dosya Sahibini Değiştir</SmallButton></Stack>
          </GroupBody>
          <GroupName>Araçlar</GroupName>
        </Group>
        <Group $w={121}>
          <GroupBody $pad={10}>
            <Stack>
              <SmallButton><SelectIcon on={[true, true, true, true]} />Tümünü seç</SmallButton>
              <SmallButton><SelectIcon on={[false, false, false, false]} />Hiçbirini Seçme</SmallButton>
              <SmallButton><SelectIcon on={[false, true, true, false]} />Zıt seçim</SmallButton>
            </Stack>
          </GroupBody>
          <GroupName>Seç</GroupName>
        </Group>
        <Group $w={218}>
          <GroupBody $pad={8}>
            <BigButton $w={52}><ColumnsIcon /><span>Sütunları<br />yapılandır</span></BigButton>
            <CheckStack>
              <CheckRow><input type="checkbox" />Önizleme bölmesi</CheckRow>
              <CheckRow><input type="checkbox" />Onay kutularını göster</CheckRow>
            </CheckStack>
          </GroupBody>
          <GroupName>Görünüm</GroupName>
        </Group>
      </Ribbon>

      <AddressRow>
        <NavButton aria-label="Geri"><Arrow c="#707070" d="M7 1L1.500 7 7 13M1.500 7H14" /></NavButton>
        <NavButton aria-label="İleri"><Arrow c="#4c4c4c" d="M8 1l5.500 6L8 13M13.500 7H1" /></NavButton>
        <NavButton aria-label="Yukarı"><Arrow c="#707070" d="M1.500 7L7.500 1.500 13.500 7M7.500 1.500V14" /></NavButton>
        <Address>
          <Drive win />
          <select aria-label="Sürücü"><option>Yerel Disk (C:)</option></select>
          <svg width="9" height="6" viewBox="0 0 9 6"><path d="M.5.500l4 4 4-4" stroke="#8a8a8a" fill="none" /></svg>
        </Address>
        <GoButton aria-label="Tara"><Play /></GoButton>
        <FactBar>
          <Drive win />
          <Facts>
            {facts.map(([k, v, w]) => <Fact key={k} $w={w}><dt>{k}</dt><dd>{v}</dd></Fact>)}
          </Facts>
        </FactBar>
      </AddressRow>

      <Main>
        <LeftColumn>
          <TreeView />
          <DriveList />
        </LeftColumn>
        <RightColumn>
          <ViewTabs>
            {views.map(([name, icon, w], i) => <ViewTab key={name} $w={w} $on={i === 1}>{icon}{name}</ViewTab>)}
          </ViewTabs>
          <Details />
        </RightColumn>
      </Main>

      <Status>
        <span>{"Boş Alan: 34,1 GB  (tümü 222 GB)"}</span>
        <span>169.484 Dosya</span>
        <span>0 Hariç tutuldu</span>
        <span>C:\Windows\SoftwareDistribution.old\</span>
      </Status>

      <TaskBar>
        <TaskItems>
          <TaskButton aria-label="Başlat"><Windows /></TaskButton>
          <SearchPill>
            <svg width="15" height="15" viewBox="0 0 15 15" fill="none" stroke="#fff" strokeWidth="1.800"><circle cx="6" cy="6" r="5" /><path d="M9.500 9.500L14 14" /></svg>
            Ara
          </SearchPill>
          {tasks.map(([name, icon, state]) => (
            <TaskButton key={name} aria-label={name} $on={state === "active"}>
              {icon}
              {state && <RunMark $on={state === "active"} />}
            </TaskButton>
          ))}
        </TaskItems>
        <Tray>
          <TrayButton $w={43} aria-label="Gizli simgeler"><svg width="11" height="7" viewBox="0 0 11 7"><path d="M.8 6l4.700-4.700L10.200 6" stroke="#fff" strokeWidth="1.500" fill="none" /></svg></TrayButton>
          <TrayButton $w={22} aria-label="Ağ">
            <svg width="17" height="17" viewBox="0 0 17 17" fill="none" stroke="#fff" strokeWidth="1.200"><path d="M10 1.500H1.500v11h11V9M4 15.500h8M7 12.500v3" /><rect x="12" y="1" width="4" height="5" /><path d="M14 6v9.500" /></svg>
          </TrayButton>
          <TrayButton $w={27} aria-label="Ses">
            <svg width="17" height="14" viewBox="0 0 17 14" fill="none" stroke="#fff" strokeWidth="1.200"><path d="M1 5h2.500L7.500 1.500v11L3.500 9H1z" /><path d="M9.500 4.500q1.500 2.500 0 5" /><path d="M11.500 3q2.800 4 0 8M13.500 1.500q4 5.500 0 11" stroke="#666" /></svg>
          </TrayButton>
          <Clock>12:11<br />30.07.2025</Clock>
          <TrayButton $w={16} aria-label="Bildirimler">
            <svg width="16" height="16" viewBox="0 0 16 16"><path d="M2 12V6.500C2 3 4 1 7 1h3v7h2.500v4H15v1H0v-1z" fill="#fff" /><path d="M5 14h4c0 2-4 2-4 0z" fill="#fff" /><path d="M11 1.500h3.500L11 5h3.500" stroke="#fff" fill="none" /><path d="M5.500 5.500H9L5.500 9H9" stroke="#1c1c1c" fill="none" /></svg>
          </TrayButton>
        </Tray>
      </TaskBar>
    </Screen>
  );
}
